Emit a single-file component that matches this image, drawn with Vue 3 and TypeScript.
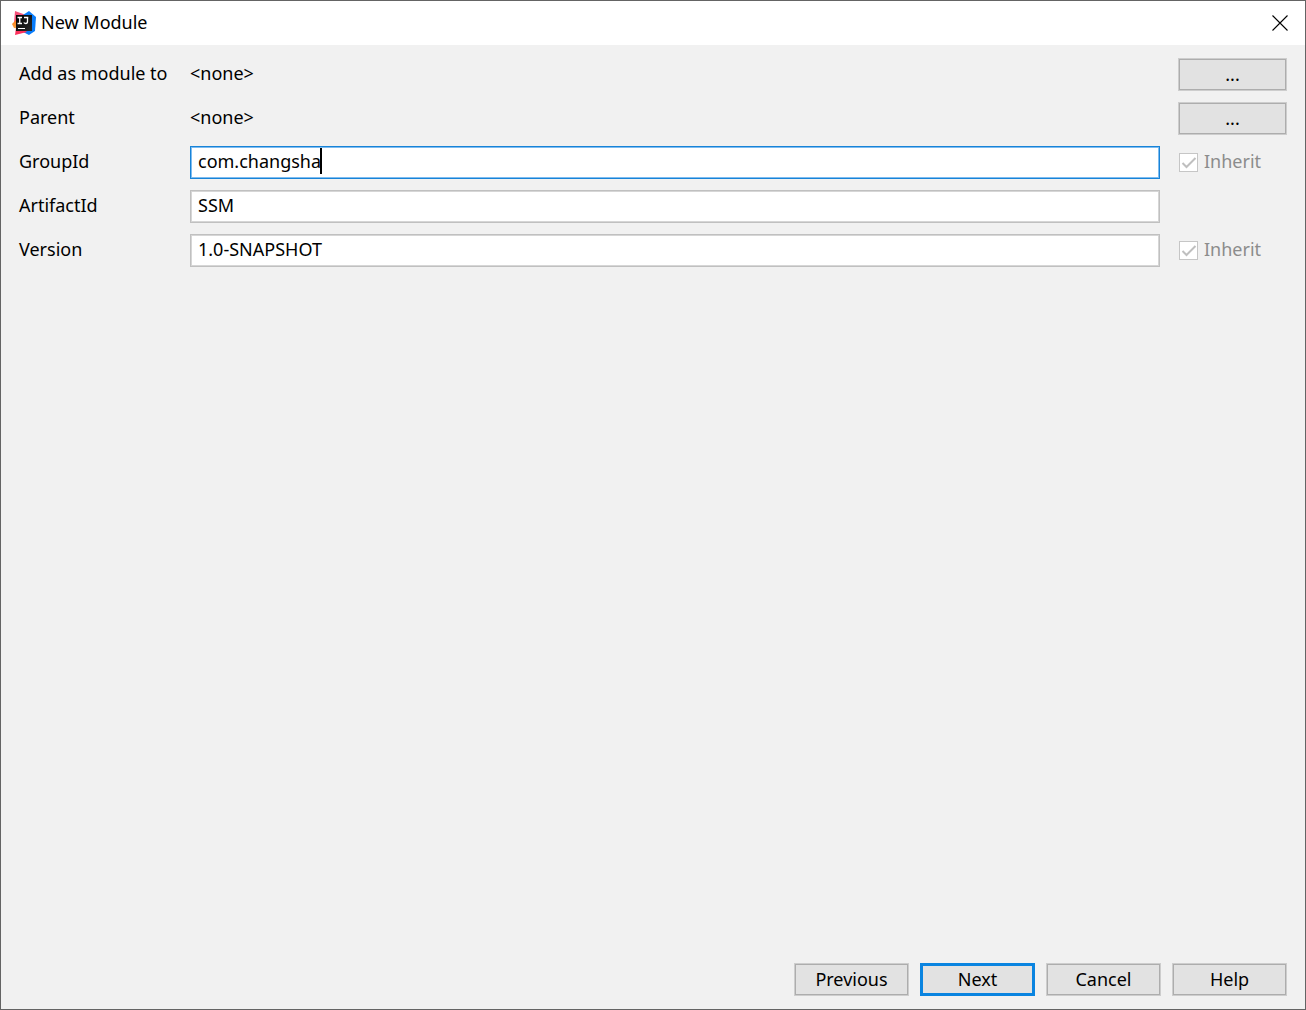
<script setup lang="ts">
import { nextTick, onMounted, ref } from 'vue'

interface Field {
  id: string
  label: string
  inherit: boolean
}

const fields: Field[] = [
  { id: 'groupId', label: 'GroupId', inherit: true },
  { id: 'artifactId', label: 'ArtifactId', inherit: false },
  { id: 'version', label: 'Version', inherit: true },
]

const values = ref<Record<string, string>>({
  groupId: 'com.changsha',
  artifactId: 'SSM',
  version: '1.0-SNAPSHOT',
})

const references = [
  { id: 'aggregator', label: 'Add as module to', value: '<none>' },
  { id: 'parent', label: 'Parent', value: '<none>' },
]

const actions = ['Previous', 'Next', 'Cancel', 'Help']

const active = ref('groupId')
const caretLeft = ref(0)

// The caret stands after the last character of the active field.
async function placeCaret() {
  await nextTick()
  const input = document.getElementById(active.value) as HTMLInputElement | null
  const context = document.createElement('canvas').getContext('2d')
  if (!input || !context) return
  const style = getComputedStyle(input)
  context.font = `${style.fontSize} ${style.fontFamily}`
  caretLeft.value = Math.round(context.measureText(input.value).width) + 7
}

function activate(id: string) {
  active.value = id
  placeCaret()
}

onMounted(placeCaret)
</script>

<template>
  <main class="dialog">
    <header class="titlebar">
      <svg class="logo" viewBox="0 0 24 24" aria-hidden="true">
        <defs>
          <linearGradient id="warm" x1="0" y1="0" x2="0" y2="1">
            <stop offset="0" stop-color="#f97a12" />
            <stop offset="1" stop-color="#fca74a" />
          </linearGradient>
          <linearGradient id="tile" x1="0" y1="0" x2="1" y2="1">
            <stop offset="0" stop-color="#000" />
            <stop offset="1" stop-color="#2b2b2b" />
          </linearGradient>
        </defs>
        <path d="M3 0 14 4 12 14 2 12Z" fill="#f4517a" />
        <path d="M0 13 4 9 10 18 2 17Z" fill="url(#warm)" />
        <path d="M11 4 17 0 24 6 23 20 17 24 11 21Z" fill="#087cfa" />
        <path d="M4 17 10 17 15 21 3 24Z" fill="#fe315d" />
        <path d="M4 4H20V20H4Z" fill="url(#tile)" />
        <path d="M5.500 6.500h4.500M7.750 6.500v6M5.500 12.500h4.500M12 6.500h4.300M15.500 6.500v4q0 2-1.700 2-1.300 0-2-1" fill="none" stroke="#fff" stroke-width="1.300" />
        <path d="M6 17h7v1H6Z" fill="#fff" />
      </svg>
      <h1 class="title">New Module</h1>
      <button class="close" type="button" aria-label="Close">
        <svg viewBox="0 0 16 16" aria-hidden="true">
          <path d="M.5.500 15.500 15.500M15.500.500.500 15.500" fill="none" stroke="#000" stroke-width="1.100" />
        </svg>
      </button>
    </header>

    <form class="body" @submit.prevent>
      <div class="form">
        <template v-for="item in references" :key="item.id">
          <span class="label">{{ item.label }}</span>
          <span class="label">{{ item.value }}</span>
          <button class="button browse" type="button" :aria-label="`Browse: ${item.label}`">...</button>
        </template>
        <template v-for="field in fields" :key="field.id">
          <label class="label" :for="field.id">{{ field.label }}</label>
          <div class="field">
            <input
              :id="field.id"
              v-model="values[field.id]"
              class="input"
              :class="{ active: active === field.id }"
              type="text"
              spellcheck="false"
              @focus="activate(field.id)"
              @input="placeCaret"
            />
            <span v-if="active === field.id" class="caret" :style="{ left: `${caretLeft}px` }"></span>
          </div>
          <label v-if="field.inherit" class="inherit">
            <input class="check" type="checkbox" checked disabled />
            <span class="label">Inherit</span>
          </label>
          <span v-else></span>
        </template>
      </div>

      <footer class="actions">
        <button
          v-for="action in actions"
          :key="action"
          class="button"
          :class="{ primary: action === 'Next' }"
          type="button"
        >{{ action }}</button>
      </footer>
    </form>
  </main>
</template>

<style>
body {
  background: #f1f1f1;
}
</style>

<style scoped>
.dialog {
  box-sizing: border-box;
  display: flex;
  flex-direction: column;
  min-height: 100vh;
  border: 1px solid #646464;
  background: #f1f1f1;
  color: #000;
  font-family: "Noto Sans", "Noto Sans CJK SC", sans-serif;
  font-size: 18px;
  line-height: 24px;
}

.titlebar {
  display: flex;
  align-items: center;
  height: 44px;
  padding: 0 17px 0 11px;
  background: #fff;
}

.logo {
  width: 24px;
  height: 24px;
  margin-right: 5px;
}

.title {
  flex: 1;
  margin: 0;
  padding-bottom: 2px;
  font-size: 18px;
  font-weight: 400;
}

.close {
  display: flex;
  padding: 0;
  border: 0;
  background: none;
}

.close svg {
  width: 16px;
  height: 16px;
}

.body {
  display: flex;
  flex: 1;
  flex-direction: column;
  justify-content: space-between;
  padding: 13px 18px;
}

.form {
  display: grid;
  grid-template-columns: 153px 1fr 109px;
  grid-auto-rows: 33px;
  gap: 11px 18px;
  align-items: center;
}

.label {
  padding-bottom: 3px;
  white-space: nowrap;
}

.field {
  position: relative;
}

.input {
  box-sizing: border-box;
  display: block;
  width: 100%;
  height: 33px;
  padding: 0 7px 3px;
  border: 1px solid #c0c0c0;
  border-radius: 0;
  outline: none;
  background: #fff;
  box-shadow: inset 0 0 0 1px #d6d6d6;
  color: #000;
  font: inherit;
  caret-color: transparent;
}

.input.active {
  border-color: #1883d7;
  box-shadow: inset 0 0 0 1px #7ebcf0;
}

.caret {
  position: absolute;
  top: 2px;
  width: 2px;
  height: 26px;
  background: #000;
}

.inherit {
  display: flex;
  align-items: center;
  gap: 6px;
  padding-left: 1px;
  color: #8c8c8c;
}

.check {
  box-sizing: border-box;
  appearance: none;
  width: 19px;
  height: 19px;
  margin: 0;
  border: 1px solid #c6c6c6;
  background: #fff url("data:image/svg+xml,%3Csvg xmlns='http://www.w3.org/2000/svg' viewBox='0 0 17 17'%3E%3Cpath d='M2.500 9 6.500 13 15.500 4' fill='none' stroke='%23bfbfbf' stroke-width='2'/%3E%3C/svg%3E") center / 17px 17px no-repeat;
}

.button {
  box-sizing: border-box;
  width: 115px;
  height: 33px;
  padding: 0 0 2px;
  border: 1px solid #cdcdcd;
  border-radius: 0;
  background: #e2e2e2;
  box-shadow: inset 0 0 0 1px #adadad;
  color: #000;
  font: inherit;
}

.browse {
  width: 109px;
}

.primary {
  border: 3px solid #0a84e0;
  box-shadow: none;
}

.actions {
  display: flex;
  justify-content: flex-end;
  gap: 11px;
}
</style>
